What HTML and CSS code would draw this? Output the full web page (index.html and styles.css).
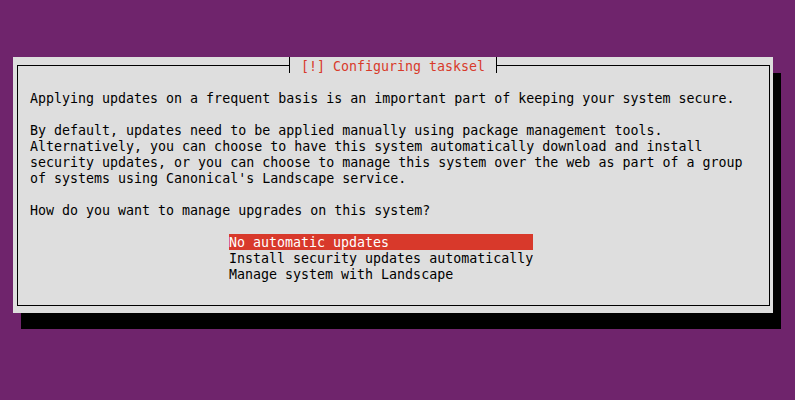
FILE: index.html
```html
<!DOCTYPE html>
<html>
<head>
<meta charset="utf-8">
<link rel="stylesheet" href="styles.css">
</head>
<body>
<div class="dialog">
  <div class="frame">
    <div class="title"><span class="tee"></span><span class="title-text">[!] Configuring tasksel</span><span class="tee"></span></div>
    <p class="para">Applying updates on a frequent basis is an important part of keeping your system secure.</p>
    <p class="para">By default, updates need to be applied manually using package management tools.
Alternatively, you can choose to have this system automatically download and install
security updates, or you can choose to manage this system over the web as part of a group
of systems using Canonical's Landscape service.</p>
    <p class="para">How do you want to manage upgrades on this system?</p>
    <div class="options">
      <div class="option selected">No automatic updates</div>
      <div class="option">Install security updates automatically</div>
      <div class="option">Manage system with Landscape</div>
    </div>
  </div>
</div>
</body>
</html>
```
FILE: styles.css
```css
html, body {
  margin: 0;
  padding: 0;
}
body {
  background: #6f246c;
  width: 795px;
  height: 400px;
  overflow: hidden;
  padding-top: 57px;
  padding-left: 13px;
  box-sizing: border-box;
  font-family: "DejaVu Sans Mono", "Liberation Mono", monospace;
  font-size: 13.3px;
  line-height: 16px;
  color: #000;
}
.dialog {
  width: 760px;
  height: 256px;
  background: #dedede;
  box-shadow: 8px 16px 0 #000;
  padding: 8px 3px 7px 4px;
  box-sizing: border-box;
}
.frame {
  position: relative;
  height: 241px;
  border: 1px solid #000;
  box-sizing: border-box;
  padding: 25px 0 0 12px;
}
.title {
  position: absolute;
  top: -9px;
  left: 271px;
  display: flex;
  align-items: stretch;
  height: 16px;
  background: #dedede;
  color: #d83a2a;
}
.tee {
  width: 1px;
  background: #000;
}
.title-text {
  padding: 2px 11px 0 11px;
  height: 16px;
  box-sizing: border-box;
  white-space: pre;
}
.para {
  margin: 0 0 16px 0;
  white-space: pre;
}
.options {
  margin-top: -1px;
  margin-left: 199px;
  width: max-content;
  display: grid;
}
.option {
  white-space: pre;
  height: 16px;
  padding-top: 1px;
  line-height: 16px;
  box-sizing: border-box;
}
.selected {
  background: #d8392b;
  color: #fff;
}
```
